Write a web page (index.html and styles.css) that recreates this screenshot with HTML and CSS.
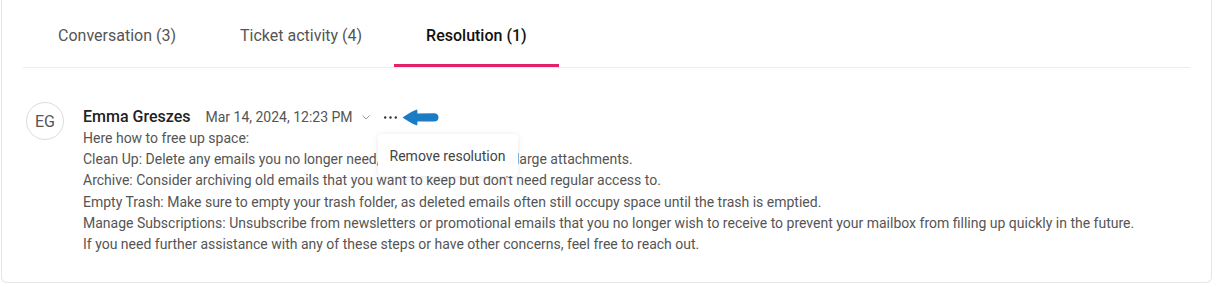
FILE: index.html
```html
<!DOCTYPE html>
<html>
<head>
<meta charset="utf-8">
<link rel="stylesheet" href="styles.css">
</head>
<body>
<div class="card">
  <div class="tabs">
    <div class="tab">Conversation (3)</div>
    <div class="tab">Ticket activity (4)</div>
    <div class="tab active">Resolution (1)</div>
  </div>
  <div class="message">
    <div class="avatar">EG</div>
    <div class="content">
      <div class="header">
        <span class="name">Emma Greszes</span>
        <span class="date">Mar 14, 2024, 12:23 PM</span>
        <svg class="chev" width="8" height="5" viewBox="0 0 8 5"><path d="M0.5 0.5 L4 4 L7.5 0.5" fill="none" stroke="#999" stroke-width="1"/></svg>
        <span class="more">
          <svg class="dots" width="13" height="3" viewBox="0 0 13 3"><circle cx="1.2" cy="1.5" r="1.2" fill="#333"/><circle cx="6.5" cy="1.5" r="1.2" fill="#333"/><circle cx="11.8" cy="1.5" r="1.2" fill="#333"/></svg>
          <div class="menu">Remove resolution</div>
        </span>
        <svg class="arrow" width="37" height="17" viewBox="0 0 37 17"><path d="M0.5 8.5 C5 5.5 10 2 15 0.5 C15.5 2 15.5 3.5 15.3 4.6 L32 4.3 C35 4.3 36.5 6.2 36.5 8.5 C36.5 10.8 35 12.6 32 12.6 L15.3 12.4 C15.5 13.5 15.5 15 15 16.5 C10 15 5 11.5 0.5 8.5 Z" fill="#1a7cc4"/></svg>
      </div>
      <div class="body">
        <div>Here how to free up space:</div>
        <div>Clean Up: Delete any emails you no longer need, <span class="covered"></span>large attachments.</div>
        <div>Archive: Consider archiving old emails that you want to keep but don't need regular access to.</div>
        <div>Empty Trash: Make sure to empty your trash folder, as deleted emails often still occupy space until the trash is emptied.</div>
        <div>Manage Subscriptions: Unsubscribe from newsletters or promotional emails that you no longer wish to receive to prevent your mailbox from filling up quickly in the future.</div>
        <div>If you need further assistance with any of these steps or have other concerns, feel free to reach out.</div>
      </div>
    </div>
  </div>
</div>
</body>
</html>
```

FILE: styles.css
```css
html, body {
  margin: 0;
  padding: 0;
  background: #ffffff;
}
body {
  font-family: Roboto, "Liberation Sans", Arial, sans-serif;
  color: #555;
}
.card {
  margin-left: 1px;
  width: 1211px;
  height: 283px;
  border: 1px solid #e6e6e6;
  border-top: none;
  border-radius: 0 0 6px 6px;
  box-sizing: border-box;
}
.tabs {
  display: flex;
  margin: 0 21px 0 21px;
  padding-left: 3px;
  border-bottom: 1px solid #ececec;
}
.tab {
  padding: 26px 32px 18px;
  font-size: 16px;
  line-height: 20px;
  color: #555;
  border-bottom: 3px solid transparent;
}
.tab.active {
  color: #111;
  font-weight: 500;
  border-bottom-color: #e5216b;
}
.message {
  display: flex;
  padding: 34px 0 0 24px;
}
.avatar {
  width: 38px;
  height: 38px;
  flex: none;
  box-sizing: border-box;
  border: 1px solid #dcdcdc;
  border-radius: 50%;
  display: flex;
  align-items: center;
  justify-content: center;
  font-size: 16px;
  color: #555;
}
.content {
  margin-left: 19px;
  padding-top: 3px;
}
.header {
  display: flex;
  align-items: center;
  height: 23px;
}
.name {
  font-size: 16px;
  font-weight: 500;
  color: #222;
}
.date {
  margin-left: 15px;
  font-size: 14px;
  color: #555;
}
.chev {
  margin-left: 9px;
  margin-top: 2px;
}
.more {
  position: relative;
  margin-left: 14px;
  display: flex;
  align-items: center;
}
.dots {
  display: block;
  margin-top: 2px;
}
.menu {
  position: absolute;
  left: -6px;
  top: 20px;
  width: 140px;
  box-sizing: border-box;
  padding: 13px 12px 11px;
  background: #fff;
  border-radius: 4px;
  box-shadow: 0 1px 6px rgba(0,0,0,0.10);
  font-size: 14px;
  line-height: 18px;
  color: #444;
  white-space: nowrap;
  z-index: 2;
}
.arrow {
  margin-left: 5px;
  margin-top: 1px;
}
.body {
  font-size: 14px;
  line-height: 21.2px;
  color: #555;
}
.covered {
  display: inline-block;
  width: 133px;
}
```
